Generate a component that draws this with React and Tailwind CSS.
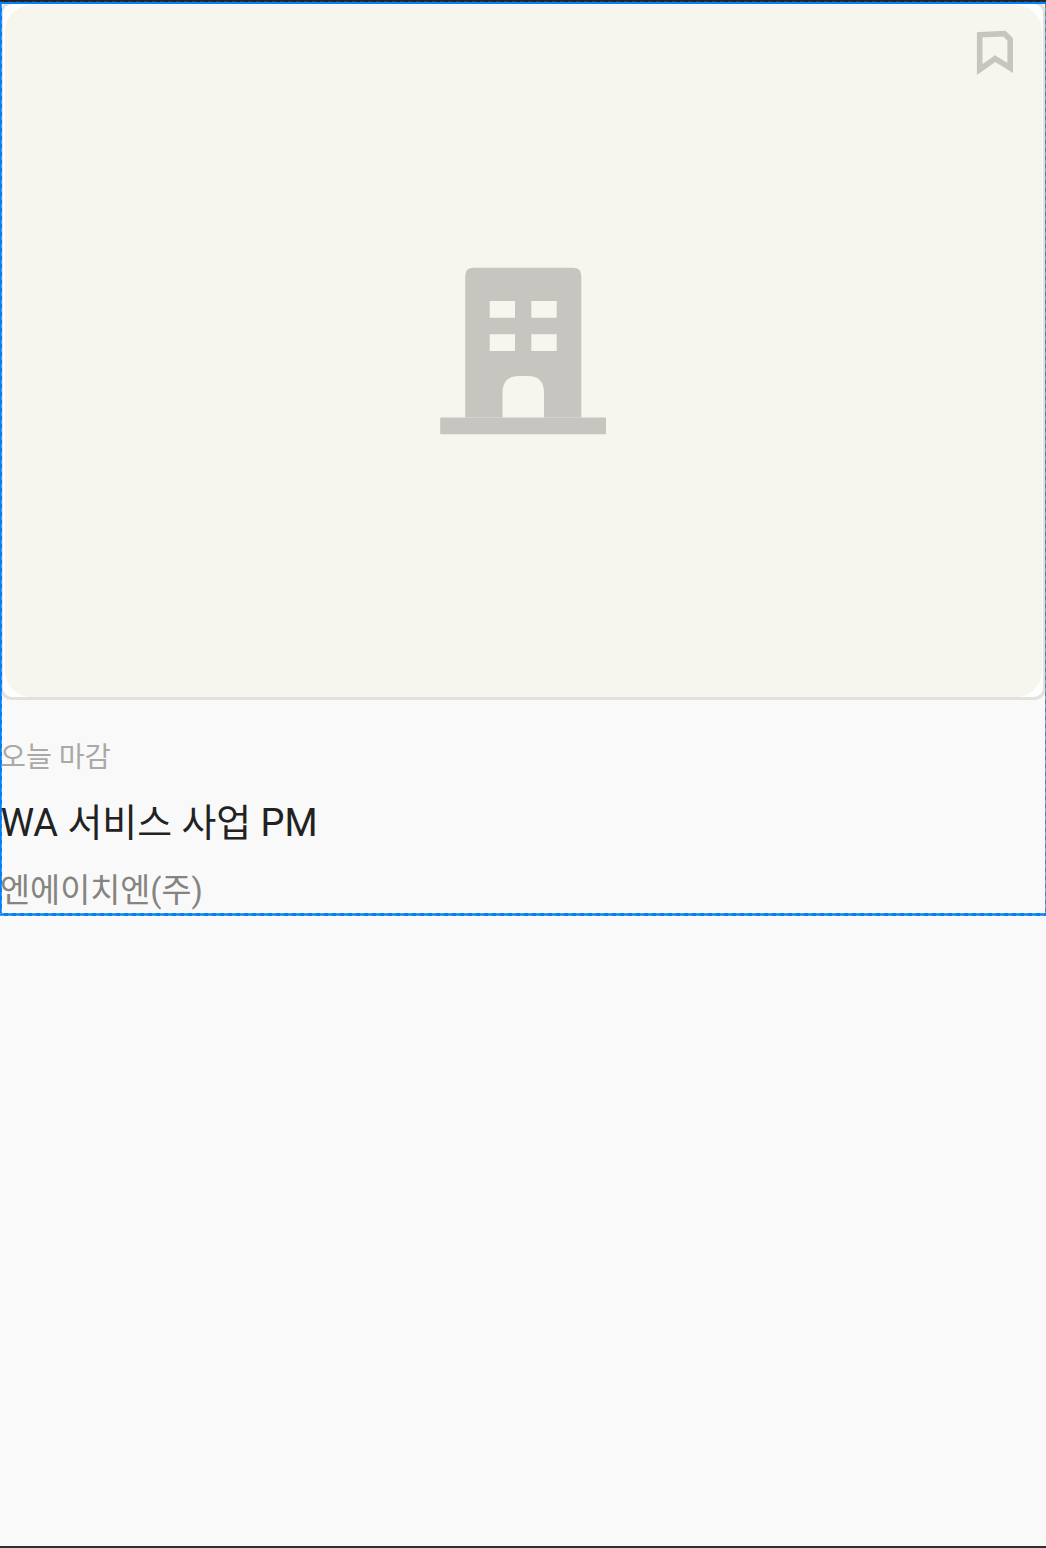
function BookmarkIcon() {
  return (
    <svg className="h-[47px] w-[38px]" viewBox="976 29 38 47" fill="none">
      <path d="M979.7 34.8L1004.4 33.6L1010.2 39.4V68L995 58.6L979.7 69.5Z" stroke="#c6c5c0" strokeWidth="5.6" strokeLinejoin="miter" />
    </svg>
  );
}

function BuildingIcon() {
  return (
    <svg className="h-[167px] w-[167px]" viewBox="0 0.4 167 167" fill="#c6c5c0" overflow="visible">
      <path
        fillRule="evenodd"
        d="M25.2 150V8.5Q25.2 0.2 33.5 0.2H133Q141.3 0.2 141.3 8.5V150H104V125Q104 108.3 87.5 108.3H79Q62.5 108.3 62.5 125V150ZM49.7 33.4V50.2H75V33.4ZM91.3 33.4V50.2H116.7V33.4ZM49.7 66.6V83.3H75V66.6ZM91.3 66.6V83.3H116.7V66.6Z"
      />
      <path d="M0.2 149.8H166V166.7H0.2Z" />
    </svg>
  );
}

function FocusOutline() {
  return (
    <div className="pointer-events-none absolute inset-0 flex flex-col">
      <div className="h-px bg-[repeating-linear-gradient(90deg,#223a52_0_4px,#222222_4px_8px)]" />
      <div className="h-0.5 bg-[#0080ff]" />
      <div className="flex flex-1 justify-between">
        <div className="flex">
          <div className="w-px bg-[#0080ff]" />
          <div className="w-px bg-[repeating-linear-gradient(180deg,#559ee0_0_4px,#0080ff_4px_8px)]" />
        </div>
        <div className="w-px bg-[repeating-linear-gradient(180deg,#777777_0_4px,#65a9e6_4px_8px)]" />
      </div>
      <div className="h-px bg-[repeating-linear-gradient(90deg,#559ee0_0_4px,#0080ff_4px_8px)]" />
      <div className="h-px bg-[#0080ff]" />
      <div className="h-px bg-[repeating-linear-gradient(90deg,#559ee0_0_4px,#0080ff_4px_8px)]" />
    </div>
  );
}

export default function App() {
  return (
    <main className="flex h-[1548px] w-full flex-col overflow-hidden border-t border-b-2 border-t-[#222222] border-b-[#303030] bg-[#f9f9f9] font-['Roboto','Noto_Sans_CJK_KR',sans-serif]">
      <article className="relative flex h-[915px] w-full shrink-0 flex-col gap-[37px] overflow-hidden">
        <div className="flex h-[699px] w-full shrink-0 rounded-[12px] border-[3px] border-[#e3e1dc] bg-white pt-px pr-px pl-[2px]">
          <div className="grid h-[692px] w-full rounded-[26px] bg-[#f6f5ee]">
            <div className="col-start-1 row-start-1 flex items-center justify-center">
              <BuildingIcon />
            </div>
            <div className="col-start-1 row-start-1 flex items-start justify-end pt-6 pr-7">
              <BookmarkIcon />
            </div>
          </div>
        </div>
        <div className="flex flex-col gap-[15px] whitespace-nowrap">
          <p className="text-[28.2px] leading-[42px] text-[#aaa9a5]">오늘 마감</p>
          <h2 className="pl-[0.5px] text-[37.9px] leading-[58px] text-[#222222]">WA 서비스 사업 PM</h2>
          <p className="text-[32.7px] leading-[48px] text-[#858480]">엔에이치엔(주)</p>
        </div>
        <FocusOutline />
      </article>
    </main>
  );
}
